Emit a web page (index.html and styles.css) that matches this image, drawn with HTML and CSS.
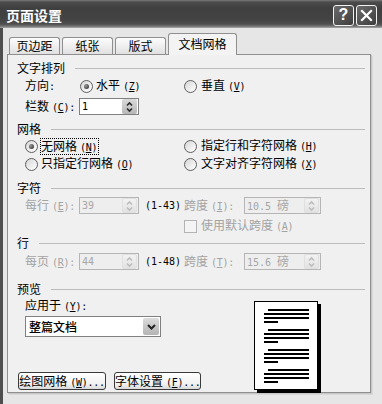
FILE: index.html
```html
<!DOCTYPE html>
<html lang="zh-CN">
<head>
<meta charset="utf-8">
<title>页面设置</title>
<link rel="stylesheet" href="styles.css">
</head>
<body>
<div class="window">
  <div class="titlebar">
    <span class="title">页面设置</span>
    <div class="tb-buttons">
      <span class="tb-btn help">?</span>
      <span class="tb-btn close"><svg width="13" height="13" viewBox="0 0 13 13"><path d="M2 2L11 11M11 2L2 11" stroke="#fff" stroke-width="2.2" stroke-linecap="square" fill="none"/></svg></span>
    </div>
  </div>
  <div class="client">
    <div class="tabs">
      <div class="tab">页边距</div>
      <div class="tab">纸张</div>
      <div class="tab">版式</div>
      <div class="tab active">文档网格</div>
    </div>
    <div class="panel">
      <div class="gtitle"><span>文字排列</span><i></i></div>
      <div class="row m3">
        <div class="half">
          <span class="lbl dir">方向<span class="lat">:</span></span>
          <span class="radio on"></span><span>水平<span class="mn">(<u>Z</u>)</span></span>
        </div>
        <div class="half2">
          <span class="radio"></span><span>垂直<span class="mn">(<u>V</u>)</span></span>
        </div>
      </div>
      <div class="row tall m4">
        <div class="half">
          <span class="lbl">栏数<span class="mn">(<u>C</u>):</span></span>
          <div class="spin">
            <span class="val lat">1</span>
            <span class="sbtn"><svg width="7" height="12" viewBox="0 0 7 12"><path d="M1 4.5L3.5 2L6 4.5M1 7.5L3.5 10L6 7.5" stroke="#2a2a2a" stroke-width="1.6" fill="none"/></svg></span>
          </div>
        </div>
      </div>

      <div class="gtitle m7"><span>网格</span><i></i></div>
      <div class="row m2">
        <div class="half">
          <span class="radio on"></span><span class="focus">无网格<span class="mn">(<u>N</u>)</span></span>
        </div>
        <div class="half2">
          <span class="radio"></span><span>指定行和字符网格<span class="mn">(<u>H</u>)</span></span>
        </div>
      </div>
      <div class="row m2">
        <div class="half">
          <span class="radio"></span><span>只指定行网格<span class="mn">(<u>O</u>)</span></span>
        </div>
        <div class="half2">
          <span class="radio"></span><span>文字对齐字符网格<span class="mn">(<u>X</u>)</span></span>
        </div>
      </div>

      <div class="gtitle m9"><span>字符</span><i></i></div>
      <div class="row tall m2">
        <div class="half">
          <span class="lbl dis">每行<span class="mn">(<u>E</u>):</span></span>
          <div class="spin off">
            <span class="val lat">39</span>
            <span class="sbtn"><svg width="7" height="12" viewBox="0 0 7 12"><path d="M1 4.5L3.5 2L6 4.5M1 7.5L3.5 10L6 7.5" stroke="#bdbdbd" stroke-width="1.6" fill="none"/></svg></span>
          </div>
          <span class="range lat">(1-43)</span>
        </div>
        <div class="half2">
          <span class="lbl2 dis">跨度<span class="mn">(<u>I</u>):</span></span>
          <div class="spin wide off">
            <span class="val"><span class="lat">10.5 </span>磅</span>
            <span class="sbtn"><svg width="7" height="12" viewBox="0 0 7 12"><path d="M1 4.5L3.5 2L6 4.5M1 7.5L3.5 10L6 7.5" stroke="#bdbdbd" stroke-width="1.6" fill="none"/></svg></span>
          </div>
        </div>
      </div>
      <div class="row short m5">
        <div class="half"></div>
        <div class="half2">
          <span class="check"></span><span class="dis">使用默认跨度<span class="mn">(<u>A</u>)</span></span>
        </div>
      </div>

      <div class="gtitle m3"><span>行</span><i></i></div>
      <div class="row tall m3">
        <div class="half">
          <span class="lbl dis">每页<span class="mn">(<u>R</u>):</span></span>
          <div class="spin off">
            <span class="val lat">44</span>
            <span class="sbtn"><svg width="7" height="12" viewBox="0 0 7 12"><path d="M1 4.5L3.5 2L6 4.5M1 7.5L3.5 10L6 7.5" stroke="#bdbdbd" stroke-width="1.6" fill="none"/></svg></span>
          </div>
          <span class="range lat">(1-48)</span>
        </div>
        <div class="half2">
          <span class="lbl2 dis">跨度<span class="mn">(<u>T</u>):</span></span>
          <div class="spin wide off">
            <span class="val"><span class="lat">15.6 </span>磅</span>
            <span class="sbtn"><svg width="7" height="12" viewBox="0 0 7 12"><path d="M1 4.5L3.5 2L6 4.5M1 7.5L3.5 10L6 7.5" stroke="#bdbdbd" stroke-width="1.6" fill="none"/></svg></span>
          </div>
        </div>
      </div>

      <div class="gtitle m12"><span>预览</span><i></i></div>
      <div class="preview">
        <div class="pv-left">
          <div class="row m2"><span>应用于<span class="mn">(<u>Y</u>):</span></span></div>
          <div class="select">
            <span class="sel-text">整篇文档</span>
            <span class="drop"><svg width="9" height="6" viewBox="0 0 9 6"><path d="M1 1L4.5 4.5L8 1" stroke="#222" stroke-width="2" fill="none"/></svg></span>
          </div>
          <div class="buttons">
            <div class="btn b1">绘图网格<span class="mn">(<u>W</u>)...</span></div>
            <div class="btn b2">字体设置<span class="mn">(<u>F</u>)...</span></div>
          </div>
        </div>
        <div class="page">
          <div class="para"><i class="ln ind"></i><i class="ln"></i><i class="ln"></i><i class="ln sh"></i></div>
          <div class="para"><i class="ln ind"></i><i class="ln"></i><i class="ln"></i><i class="ln sh"></i></div>
          <div class="para"><i class="ln ind"></i><i class="ln"></i><i class="ln"></i><i class="ln sh"></i></div>
          <div class="para"><i class="ln ind"></i><i class="ln"></i><i class="ln"></i><i class="ln sh"></i></div>
        </div>
      </div>
    </div>
  </div>
</div>
</body>
</html>
```

FILE: styles.css
```css
* { box-sizing: border-box; margin: 0; padding: 0; }
html, body { width: 382px; height: 404px; overflow: hidden; }
body {
  background: #e6e6e6;
  font: 12px/14px "Noto Sans CJK SC", sans-serif;
  color: #000;
  white-space: nowrap;
}
.window { width: 382px; height: 404px; display: flex; flex-direction: column; background: #e6e6e6; }

.titlebar {
  height: 28px; flex: none;
  display: flex; align-items: center; justify-content: space-between;
  padding: 2px 5px 0 6px;
  background: linear-gradient(to bottom, #7a7a7a 0px, #4c4c4c 2px, #3f3f3f 8px, #444 20px, #4e4e4e 24px, #6e6e6e 26px, #a9a9a9 28px);
}
.title { color: #fff; font-weight: bold; font-size: 14px; line-height: 16px; }
.tb-buttons { display: flex; gap: 2px; }
.tb-btn {
  width: 21px; height: 21px;
  border: 1px solid #f2f2f2; border-radius: 3px;
  background: linear-gradient(135deg, #6a6a6a, #3e3e3e);
  display: flex; align-items: center; justify-content: center;
  color: #fff;
}
.help { font: bold 16px/1 "Liberation Sans", sans-serif; }

.client {
  flex: 1;
  border-left: 3px solid #4e4e4e;
  padding: 5px 0 0 4px;
  display: flex; flex-direction: column;
}
.tabs { height: 21px; display: flex; align-items: flex-end; gap: 2px; padding-left: 2px; position: relative; z-index: 2; }
.tab {
  width: 51px; height: 17px;
  border: 1px solid #8f8f8f; border-bottom: none;
  border-radius: 3px 3px 0 0;
  background: linear-gradient(#fdfdfd, #ececec 60%, #e0e0e0);
  text-align: center; line-height: 15px;
}
.tab.active {
  width: 69px; height: 22px; margin-bottom: -1px;
  background: #f3f3f3;
  line-height: 20px;
}

.panel {
  width: 364px; height: 339px;
  border: 1px solid #8f8f8f;
  background: #f0f0f0;
  box-shadow: 1px 1px 0 #c8c8c8, 2px 2px 0 #d8d8d8;
  padding: 6px 5px 2px 9px;
  display: flex; flex-direction: column;
}

.gtitle { display: flex; align-items: center; height: 14px; flex: none; }
.gtitle i { flex: 1; height: 1px; background: #bcbcbc; margin-left: 10px; }

.m2 { margin-top: 2px; }
.m3 { margin-top: 3px; }
.m4 { margin-top: 4px; }
.m5 { margin-top: 5px; }
.m7 { margin-top: 7px; }
.m9 { margin-top: 9px; }
.m12 { margin-top: 12px; }

.row { display: flex; align-items: center; height: 16px; padding-left: 8px; flex: none; }
.row.tall { height: 17px; }
.row.short { height: 14px; }
.half { width: 159px; flex: none; display: flex; align-items: center; }
.half2 { flex: 1; display: flex; align-items: center; }
.lbl { width: 54px; flex: none; }
.lbl.dir { width: 55px; }
.lbl2 { width: 60px; flex: none; }
.dis { color: #a3a3a3; }

.lat { font-family: "DejaVu Sans Mono", monospace; font-size: 10px; }
.mn { font-family: "DejaVu Sans Mono", monospace; font-size: 10px; margin-left: 3px; letter-spacing: -0.3px; }

.radio {
  width: 13px; height: 13px; flex: none;
  border-radius: 50%;
  border: 1px solid #5e5e5e;
  background: linear-gradient(135deg, #d6d6d6, #f4f4f4 70%, #fff);
  margin-right: 3px;
  position: relative;
}
.half2 .radio { margin-right: 4px; }
.radio.on::after {
  content: ""; position: absolute; left: 3px; top: 3px;
  width: 5px; height: 5px; border-radius: 50%;
  background: radial-gradient(circle at 35% 35%, #9a9a9a, #3a3a3a 80%);
}
.focus { border: 1px dotted #000; margin-left: -1px; line-height: 13px; padding-right: 1px; }

.check {
  width: 13px; height: 13px; flex: none;
  border: 1px solid #b4b4b4; background: #f4f4f4;
  margin-right: 4px;
}

.spin {
  width: 60px; height: 17px; flex: none;
  border: 1px solid #808080; background: #fff;
  display: flex; align-items: center;
  padding-left: 2px;
}
.spin.wide { width: 77px; }
.spin.off { border-color: #b5b5b5; background: #eeeeee; color: #a6a6a6; }
.spin .val { flex: 1; line-height: 13px; }
.sbtn {
  width: 15px; height: 15px; margin-right: 1px;
  border-radius: 2px;
  background: linear-gradient(#dadada, #b7b7b7);
  display: flex; align-items: center; justify-content: center;
}
.spin.off .sbtn { background: linear-gradient(#f2f2f2, #e2e2e2); border: 1px solid #e0e0e0; }
.range { margin-left: 6px; }

.preview { flex: 1; display: flex; }
.pv-left { width: 237px; flex: none; display: flex; flex-direction: column; }
.select {
  width: 136px; height: 21px; margin: 2px 0 0 8px;
  border: 1px solid #808080; background: #fff;
  display: flex; align-items: center; padding-left: 3px;
}
.sel-text { flex: 1; font-weight: 500; }
.drop {
  width: 16px; height: 17px; margin-right: 1px;
  border-radius: 2px;
  background: linear-gradient(#dcdcdc, #b4b4b4);
  display: flex; align-items: center; justify-content: center;
}
.buttons { margin-top: auto; display: flex; gap: 8px; padding-left: 1px; }
.btn {
  height: 18px;
  border: 1px solid #3a3a3a; border-radius: 3px;
  background: linear-gradient(#ffffff, #f1f1f1 70%, #d9d9d9);
  text-align: center; line-height: 16px;
}
.b1 { width: 88px; }
.b2 { width: 87px; }

.page {
  width: 64px; height: 89px; margin-top: 5px;
  border: 1px solid #000; background: #fff;
  box-shadow: 3px 3px 0 #000;
  padding: 7px 0 0 9px;
  display: flex; flex-direction: column; gap: 6px;
}
.para { display: flex; flex-direction: column; gap: 2px; }
.ln { display: block; height: 2px; width: 45px; background: #000; }
.ln.ind { margin-left: 4px; width: 41px; }
.ln.sh { width: 14px; }
```
